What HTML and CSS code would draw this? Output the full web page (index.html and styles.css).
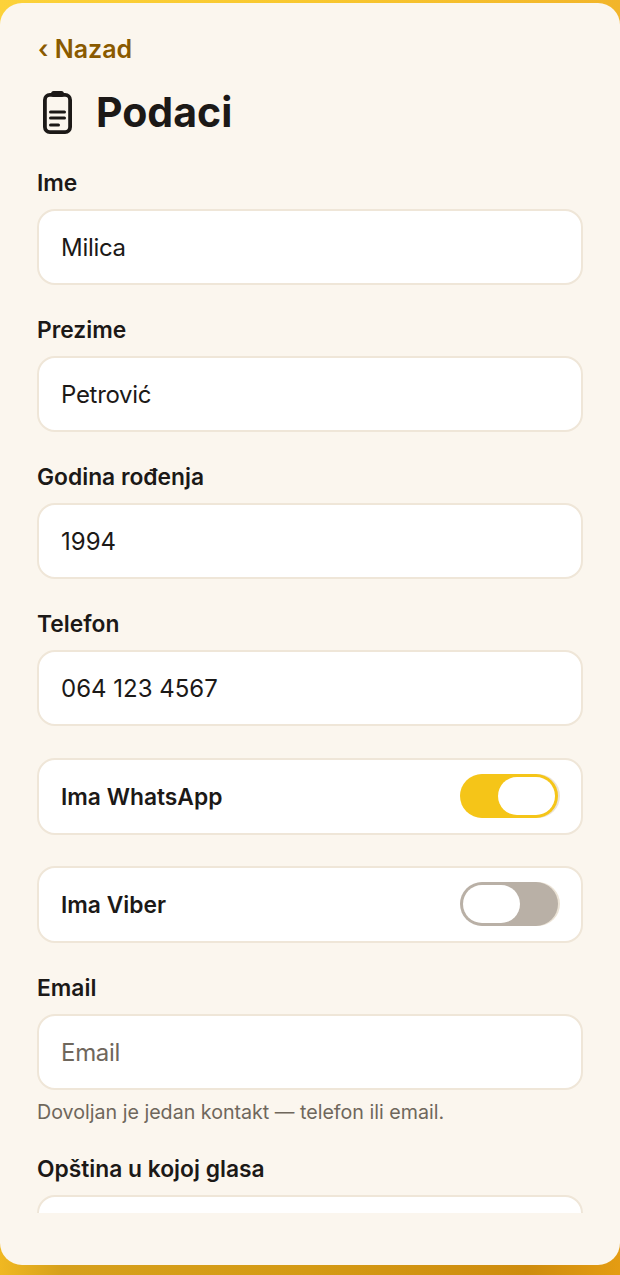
FILE: index.html
```html
<!DOCTYPE html>
<html lang="sr">
<head>
<meta charset="utf-8">
<title>Podaci</title>
<link rel="stylesheet" href="styles.css">
</head>
<body>
<main class="card">
  <div class="scroll">
    <a class="back" href="#"><span class="chev">‹</span> Nazad</a>
    <h1 class="title">
      <svg class="title-icon" viewBox="0 0 29 43" width="29" height="43" fill="none" stroke="#1c1917" stroke-linecap="round" stroke-linejoin="round">
        <rect x="1.9" y="3.9" width="25.2" height="37.2" rx="5" stroke-width="3.8"/>
        <rect x="9" y="0.9" width="11" height="4.2" rx="1.6" fill="#1c1917" stroke-width="1.8"/>
        <path d="M7.5 21h14M7.5 27h14M7.5 34h8" stroke-width="3"/>
      </svg>
      <span>Podaci</span>
    </h1>
    <div class="field">
      <label class="label" for="ime">Ime</label>
      <input class="input" id="ime" value="Milica">
    </div>
    <div class="field">
      <label class="label" for="prezime">Prezime</label>
      <input class="input" id="prezime" value="Petrović">
    </div>
    <div class="field">
      <label class="label" for="godina">Godina rođenja</label>
      <input class="input numeric" id="godina" value="1994">
    </div>
    <div class="field telefon">
      <label class="label" for="telefon">Telefon</label>
      <input class="input numeric" id="telefon" value="064 123 4567">
    </div>
    <div class="toggle-row">
      <span class="toggle-label">Ima WhatsApp</span>
      <span class="switch on"><span class="knob"></span></span>
    </div>
    <div class="toggle-row last">
      <span class="toggle-label">Ima Viber</span>
      <span class="switch"><span class="knob"></span></span>
    </div>
    <div class="field email">
      <label class="label" for="email">Email</label>
      <input class="input" id="email" placeholder="Email">
      <p class="hint">Dovoljan je jedan kontakt — telefon ili email.</p>
    </div>
    <div class="field opstina">
      <label class="label" for="opstina">Opština u kojoj glasa</label>
      <input class="input" id="opstina">
    </div>
  </div>
</main>
</body>
</html>
```
FILE: styles.css
```css
* { box-sizing: border-box; }
html, body { margin: 0; height: 100%; }
body {
  width: 620px;
  height: 1275px;
  overflow: hidden;
  padding: 3px 0 10px;
  background:
    linear-gradient(90deg, #fcd23a 0%, #f8c72e 50%, #f2b52a 100%) top / 100% 40px no-repeat,
    linear-gradient(90deg, #f0b822 0%, #d6a01c 10%, #d49a14 50%, #ce8c0e 85%, #e49c12 100%) bottom / 100% 40px no-repeat,
    #f0b822;
  font-family: Inter, "Liberation Sans", sans-serif;
  color: #1c1917;
}
.card {
  height: 1262px;
  background: #fbf6ee;
  border-radius: 22px;
  overflow: hidden;
}
.scroll {
  height: 1210px;
  overflow: hidden;
  padding: 30px 37px 0;
}
.back {
  display: block;
  margin-left: 1px;
  font-size: 25px;
  line-height: 33px;
  font-weight: 600;
  color: #8a5a00;
  text-decoration: none;
}
.title {
  display: flex;
  align-items: center;
  gap: 24px;
  margin: 22px 0 0 6px;
  font-size: 41px;
  line-height: 48px;
  font-weight: 700;
}
.title-icon { flex: none; }
.field { margin-bottom: 30px; }
.field:first-of-type { margin-top: 32px; }
.telefon { margin-bottom: 32px; }
.label {
  display: block;
  margin-bottom: 12px;
  font-size: 22.8px;
  line-height: 29px;
  font-weight: 600;
}
.input {
  display: block;
  width: 100%;
  height: 76px;
  padding: 0 22px;
  background: #fff;
  border: 2px solid #efe6d8;
  border-radius: 18px;
  font-family: inherit;
  font-size: 24px;
  letter-spacing: -0.3px;
  color: #1c1917;
  outline: none;
}
.input.numeric { letter-spacing: 0; }
.input::placeholder { color: #6f675c; opacity: 1; }
.toggle-row {
  display: flex;
  align-items: center;
  justify-content: space-between;
  height: 77px;
  margin-bottom: 31px;
  padding: 0 23px 1px 22px;
  background: #fff;
  border: 2px solid #efe6d8;
  border-radius: 18px;
}
.toggle-row.last { margin-bottom: 30px; }
.toggle-label { font-size: 22.8px; font-weight: 600; }
.switch {
  display: flex;
  width: 98px;
  height: 44px;
  padding: 3px;
  border-radius: 22px;
  background: #b9b0a6;
  box-shadow: 2px 0 0 0 #ebe3d6;
}
.switch.on { background: #f5c518; justify-content: flex-end; }
.knob {
  width: 57px;
  height: 38px;
  border-radius: 19px;
  background: #fff;
}
.email { margin-bottom: 0; }
.hint {
  margin: 10px 0 0;
  font-size: 19.65px;
  line-height: 25px;
  color: #6f675c;
}
.opstina { margin-top: 29px; margin-bottom: 0; }
```
